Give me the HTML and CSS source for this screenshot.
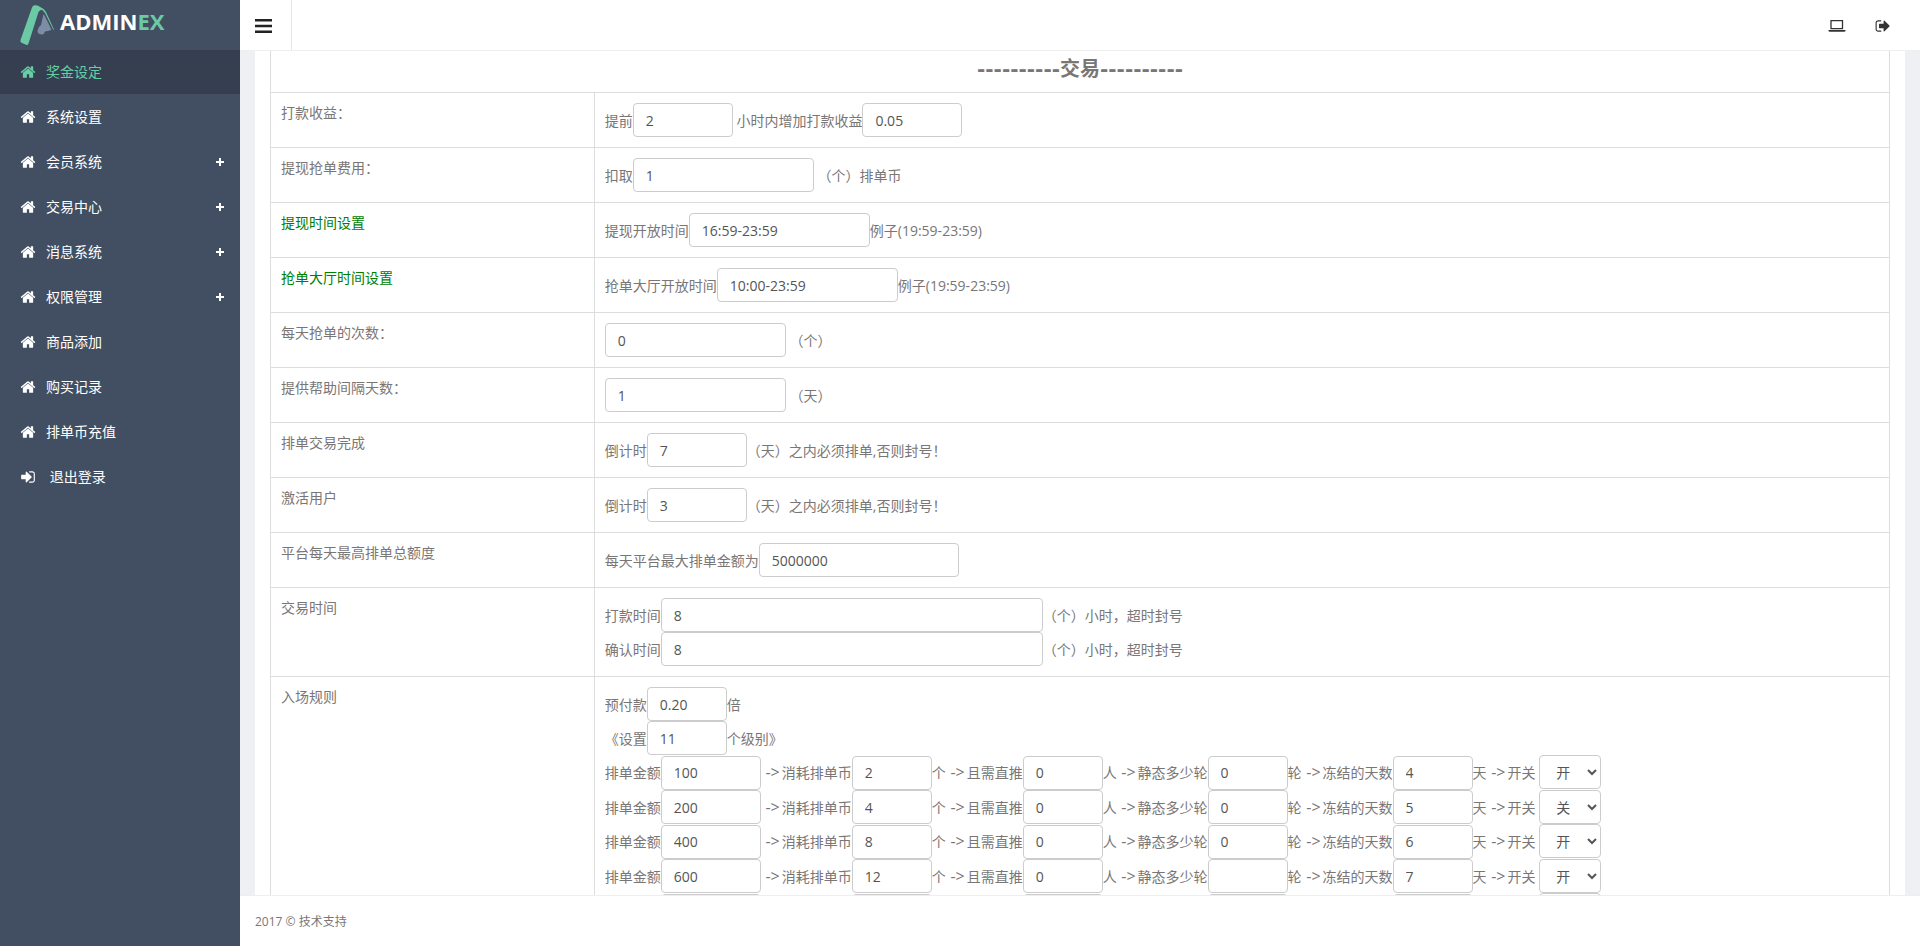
FILE: index.html
```html
<!DOCTYPE html>
<html lang="zh-CN">
<head>
  <meta charset="UTF-8" />
  <meta name="viewport" content="width=device-width, initial-scale=1.0"/>
  <title>奖金设定</title>
  <link rel="stylesheet" href="styles.css">
</head>
<body>
  <!-- shared icon shapes -->
  <svg class="sprite" aria-hidden="true">
    <symbol id="icon-home" viewBox="0 0 1792 1792"><path d="M1472 992v480q0 26-19 45t-45 19h-384v-384h-256v384h-384q-26 0-45-19t-19-45v-480q0-1 .5-3t.5-3l575-474 575 474q1 2 1 6zm223-69l-62 74q-8 9-21 11h-3q-13 0-21-7l-692-577-692 577q-12 8-24 7-13-2-21-11l-62-74q-8-10-7-23.5t11-21.5l719-599q32-26 76-26t76 26l244 204v-195q0-14 9-23t23-9h192q14 0 23 9t9 23v408l219 182q10 8 11 21.5t-7 23.5z"/></symbol>
    <symbol id="icon-sign-in" viewBox="0 0 1792 1792"><path d="M1312 896q0 26-19 45l-544 544q-19 19-45 19t-45-19-19-45v-288h-448q-26 0-45-19t-19-45v-384q0-26 19-45t45-19h448v-288q0-26 19-45t45-19 45 19l544 544q19 19 19 45zm352-352v704q0 119-84.5 203.5t-203.5 84.5h-320q-13 0-22.5-9.5t-9.5-22.5q0-4-1-20t-.5-26.5 3-23.5 10-19.5 20.5-6.5h320q66 0 113-47t47-113v-704q0-66-47-113t-113-47h-312l-11.5-1-11.5-3-8-5.5-7-9-2-13.5q0-4-1-20t-.5-26.5 3-23.5 10-19.5 20.5-6.5h320q119 0 203.5 84.5t84.5 203.5z"/></symbol>
    <symbol id="icon-sign-out" viewBox="0 0 1792 1792"><path d="M704 1440q0 4 1 20t.5 26.5-3 23.5-10 19.5-20.5 6.5h-320q-119 0-203.5-84.5t-84.5-203.5v-704q0-119 84.5-203.5t203.5-84.5h320q13 0 22.5 9.5t9.5 22.5q0 4 1 20t.5 26.5-3 23.5-10 19.5-20.5 6.5h-320q-66 0-113 47t-47 113v704q0 66 47 113t113 47h312l11.5 1 11.5 3 8 5.5 7 9 2 13.5zm928-544q0 26-19 45l-544 544q-19 19-45 19t-45-19-19-45v-288h-448q-26 0-45-19t-19-45v-384q0-26 19-45t45-19h448v-288q0-26 19-45t45-19 45 19l544 544q19 19 19 45z"/></symbol>
  </svg>

  <aside class="sidebar">
    <a href="#" class="logo">
      <svg class="logo-mark" width="36" height="42" viewBox="0 0 36 42" aria-hidden="true">
        <path fill="#6cc9a5" d="M12 2.500Q13 0 15 0.200Q17 0 19 1.200L24 4.500Q20 4 18.500 7L8.500 38.500Q8 40.500 6 39.700L1.500 37.700Q0 37 0.500 35Z"/>
        <path fill="#6cc9a5" d="M18 2Q24 3 26 7L34 24.500L33.500 25L25 8Q22 3.500 18 2Z"/>
        <path fill="#7c8da5" d="M23.500 9Q26 13 31.500 25Q27 26 25 26.500Q24 30 21.500 29.500Q17 29 17.500 25.500Q18 22 21 20Z"/>
      </svg>
      <span class="logo-text">ADMIN<span class="logo-ex">EX</span></span>
    </a>
    <nav class="menu">
      <a href="#" class="menu-item active"><svg class="icon"><use href="#icon-home"/></svg>奖金设定</a>
      <a href="#" class="menu-item"><svg class="icon"><use href="#icon-home"/></svg>系统设置</a>
      <a href="#" class="menu-item has-sub"><svg class="icon"><use href="#icon-home"/></svg>会员系统</a>
      <a href="#" class="menu-item has-sub"><svg class="icon"><use href="#icon-home"/></svg>交易中心</a>
      <a href="#" class="menu-item has-sub"><svg class="icon"><use href="#icon-home"/></svg>消息系统</a>
      <a href="#" class="menu-item has-sub"><svg class="icon"><use href="#icon-home"/></svg>权限管理</a>
      <a href="#" class="menu-item"><svg class="icon"><use href="#icon-home"/></svg>商品添加</a>
      <a href="#" class="menu-item"><svg class="icon"><use href="#icon-home"/></svg>购买记录</a>
      <a href="#" class="menu-item"><svg class="icon"><use href="#icon-home"/></svg>排单币充值</a>
      <a href="#" class="menu-item"><svg class="icon"><use href="#icon-sign-in"/></svg>&nbsp;退出登录</a>
    </nav>
  </aside>

  <div class="main">
    <header class="header">
      <button type="button" class="toggle-btn" aria-label="菜单">
        <svg width="17" height="14" viewBox="0 0 17 14"><path fill="#222" d="M0 0h17v2.500H0zM0 5.700h17v2.500H0zM0 11.400h17v2.500H0z"/></svg>
      </button>
      <div class="header-links">
        <a href="#" aria-label="前台">
          <svg width="18" height="16" viewBox="0 0 18 16"><path fill="none" stroke="#333" stroke-width="1.300" d="M3 2.700h11.500v8H3z"/><path fill="#333" d="M0.500 12h17v1Q17.500 13.800 16 13.800H2Q0.500 13.800 0.500 13z"/></svg>
        </a>
        <a href="#" aria-label="退出"><svg class="icon"><use href="#icon-sign-out"/></svg></a>
      </div>
    </header>

    <div class="content">
      <form class="panel">
        <table class="settings">
          <tr class="title-row">
            <th colspan="2">----------交易----------</th>
          </tr>
          <tr>
            <td class="name">打款收益：</td>
            <td>
              <div class="line"><label>提前<input type="text" class="w-100" value="2"></label> <label>小时内增加打款收益<input type="text" class="w-100" value="0.05"></label></div>
            </td>
          </tr>
          <tr>
            <td class="name">提现抢单费用：</td>
            <td>
              <div class="line"><label>扣取<input type="text" class="w-181" value="1"> （个）排单币</label></div>
            </td>
          </tr>
          <tr>
            <td class="name green">提现时间设置</td>
            <td>
              <div class="line"><label>提现开放时间<input type="text" class="w-181" value="16:59-23:59">例子(19:59-23:59)</label></div>
            </td>
          </tr>
          <tr>
            <td class="name green">抢单大厅时间设置</td>
            <td>
              <div class="line"><label>抢单大厅开放时间<input type="text" class="w-181" value="10:00-23:59">例子(19:59-23:59)</label></div>
            </td>
          </tr>
          <tr>
            <td class="name">每天抢单的次数：</td>
            <td>
              <div class="line"><label><input type="text" class="w-181" value="0"> （个）</label></div>
            </td>
          </tr>
          <tr>
            <td class="name">提供帮助间隔天数：</td>
            <td>
              <div class="line"><label><input type="text" class="w-181" value="1"> （天）</label></div>
            </td>
          </tr>
          <tr>
            <td class="name">排单交易完成</td>
            <td>
              <div class="line"><label>倒计时<input type="text" class="w-100" value="7">（天）之内必须排单,否则封号！</label></div>
            </td>
          </tr>
          <tr>
            <td class="name">激活用户</td>
            <td>
              <div class="line"><label>倒计时<input type="text" class="w-100" value="3">（天）之内必须排单,否则封号！</label></div>
            </td>
          </tr>
          <tr>
            <td class="name">平台每天最高排单总额度</td>
            <td>
              <div class="line"><label>每天平台最大排单金额为<input type="text" class="w-200" value="5000000"></label></div>
            </td>
          </tr>
          <tr>
            <td class="name">交易时间</td>
            <td>
              <div class="line"><label>打款时间<input type="text" class="w-382" value="8">（个）小时，超时封号</label></div>
              <div class="line"><label>确认时间<input type="text" class="w-382" value="8">（个）小时，超时封号</label></div>
            </td>
          </tr>
          <tr>
            <td class="name">入场规则</td>
            <td>
              <div class="line"><label>预付款<input type="text" class="w-80" value="0.20">倍</label></div>
              <div class="line"><label>《设置<input type="text" class="w-80" value="11">个级别》</label></div>
              <div class="line">
                <label>排单金额<input type="text" class="w-100" value="100"></label>
                <label><span class="arrow">-&gt;</span>消耗排单币<input type="text" class="w-80" value="2">个</label>
                <label><span class="arrow">-&gt;</span>且需直推<input type="text" class="w-80" value="0">人</label>
                <label><span class="arrow">-&gt;</span>静态多少轮<input type="text" class="w-80" value="0">轮</label>
                <label><span class="arrow">-&gt;</span>冻结的天数<input type="text" class="w-80" value="4">天</label>
                <label><span class="arrow">-&gt;</span>开关 <select><option selected>开</option><option>关</option></select></label>
              </div>
              <div class="line">
                <label>排单金额<input type="text" class="w-100" value="200"></label>
                <label><span class="arrow">-&gt;</span>消耗排单币<input type="text" class="w-80" value="4">个</label>
                <label><span class="arrow">-&gt;</span>且需直推<input type="text" class="w-80" value="0">人</label>
                <label><span class="arrow">-&gt;</span>静态多少轮<input type="text" class="w-80" value="0">轮</label>
                <label><span class="arrow">-&gt;</span>冻结的天数<input type="text" class="w-80" value="5">天</label>
                <label><span class="arrow">-&gt;</span>开关 <select><option>开</option><option selected>关</option></select></label>
              </div>
              <div class="line">
                <label>排单金额<input type="text" class="w-100" value="400"></label>
                <label><span class="arrow">-&gt;</span>消耗排单币<input type="text" class="w-80" value="8">个</label>
                <label><span class="arrow">-&gt;</span>且需直推<input type="text" class="w-80" value="0">人</label>
                <label><span class="arrow">-&gt;</span>静态多少轮<input type="text" class="w-80" value="0">轮</label>
                <label><span class="arrow">-&gt;</span>冻结的天数<input type="text" class="w-80" value="6">天</label>
                <label><span class="arrow">-&gt;</span>开关 <select><option selected>开</option><option>关</option></select></label>
              </div>
              <div class="line">
                <label>排单金额<input type="text" class="w-100" value="600"></label>
                <label><span class="arrow">-&gt;</span>消耗排单币<input type="text" class="w-80" value="12">个</label>
                <label><span class="arrow">-&gt;</span>且需直推<input type="text" class="w-80" value="0">人</label>
                <label><span class="arrow">-&gt;</span>静态多少轮<input type="text" class="w-80" value="">轮</label>
                <label><span class="arrow">-&gt;</span>冻结的天数<input type="text" class="w-80" value="7">天</label>
                <label><span class="arrow">-&gt;</span>开关 <select><option selected>开</option><option>关</option></select></label>
              </div>
              <div class="line">
                <label>排单金额<input type="text" class="w-100" value=""></label>
                <label><span class="arrow">-&gt;</span>消耗排单币<input type="text" class="w-80" value="">个</label>
                <label><span class="arrow">-&gt;</span>且需直推<input type="text" class="w-80" value="">人</label>
                <label><span class="arrow">-&gt;</span>静态多少轮<input type="text" class="w-80" value="">轮</label>
                <label><span class="arrow">-&gt;</span>冻结的天数<input type="text" class="w-80" value="">天</label>
                <label><span class="arrow">-&gt;</span>开关 <select><option selected>开</option><option>关</option></select></label>
              </div>
            </td>
          </tr>
        </table>
      </form>
    </div>

    <footer class="footer">2017 © 技术支持</footer>
  </div>
</body>
</html>
```
FILE: styles.css
```css
* {
  box-sizing: border-box;
  margin: 0;
  padding: 0;
}

body {
  display: flex;
  height: 100vh;
  overflow: hidden;
  font-family: "Open Sans", "Noto Sans CJK SC", sans-serif;
  font-size: 14px;
  line-height: 20px;
  color: #7a7676;
  background: #eff0f4;
}

a {
  color: inherit;
  text-decoration: none;
}

.sprite {
  display: none;
}

.icon {
  width: 16px;
  height: 16px;
  fill: currentColor;
}

/* sidebar */
.sidebar {
  flex: 0 0 240px;
  background: #424f63;
  color: #fff;
}

.logo {
  display: flex;
  align-items: flex-start;
  gap: 4px;
  height: 50px;
  padding: 5px 20px;
}

.logo-text {
  font-size: 22px;
  font-weight: 700;
  line-height: 32px;
}

.logo-ex {
  color: #6cc9a5;
}

.menu {
  display: flex;
  flex-direction: column;
  gap: 1px;
}

.menu-item {
  display: flex;
  align-items: center;
  height: 44px;
  padding: 0 16px 0 20px;
}

.menu-item .icon {
  margin-right: 10px;
}

.menu-item.active {
  background: #353f4f;
  color: #65cea7;
}

.has-sub::after {
  content: "";
  width: 8px;
  height: 8px;
  margin-left: auto;
  background:
    linear-gradient(#fff, #fff) center / 8px 2px no-repeat,
    linear-gradient(#fff, #fff) center / 2px 8px no-repeat;
}

/* header */
.main {
  flex: 1;
  display: flex;
  flex-direction: column;
  min-width: 0;
}

.header {
  flex: none;
  display: flex;
  justify-content: space-between;
  height: 51px;
  background: #fff;
  border-bottom: 1px solid #eee;
}

.toggle-btn {
  display: flex;
  align-items: center;
  padding: 2px 19px 0 15px;
  background: none;
  border: 0;
  border-right: 1px solid #e7e7e7;
  cursor: pointer;
}

.header-links {
  display: flex;
  align-items: center;
  gap: 29px;
  padding: 2px 29px 0 0;
  color: #333;
}

.header-links a {
  display: flex;
}

/* settings table */
.content {
  flex: 1;
  min-height: 0;
  padding: 0 15px;
  overflow-y: auto;
  scrollbar-width: none;
}

.panel {
  padding: 0 15px;
  background: #fff;
}

.settings {
  width: 100%;
  border-collapse: collapse;
}

.settings td,
.settings th {
  border: 1px solid #ddd;
  padding: 10px;
  vertical-align: top;
}

.settings .title-row th {
  padding: 7px 10px 12px;
  border-top: 0;
  font-family: "DejaVu Sans", "Noto Sans CJK SC", sans-serif;
  font-size: 20px;
  line-height: 22px;
}

.settings .name {
  width: 20%;
}

.settings .green {
  color: green;
}

.line {
  white-space: nowrap;
}

.line input,
.line select {
  height: 34px;
  padding: 6px 12px;
  font: inherit;
  color: #555;
  background: #fff;
  border: 1px solid #ccc;
  border-radius: 4px;
}

.line select {
  width: 62px;
}

.arrow {
  margin: 0 2px 0 1px;
  font-size: 16px;
}

.w-80 {
  width: 80px;
}

.w-100 {
  width: 100px;
}

.w-181 {
  width: 181px;
}

.w-200 {
  width: 200px;
}

.w-382 {
  width: 382px;
}

/* footer */
.footer {
  flex: none;
  padding: 16px 15px 14px;
  font-size: 12px;
  background: #fff;
  border-top: 1px solid #eee;
}
```
